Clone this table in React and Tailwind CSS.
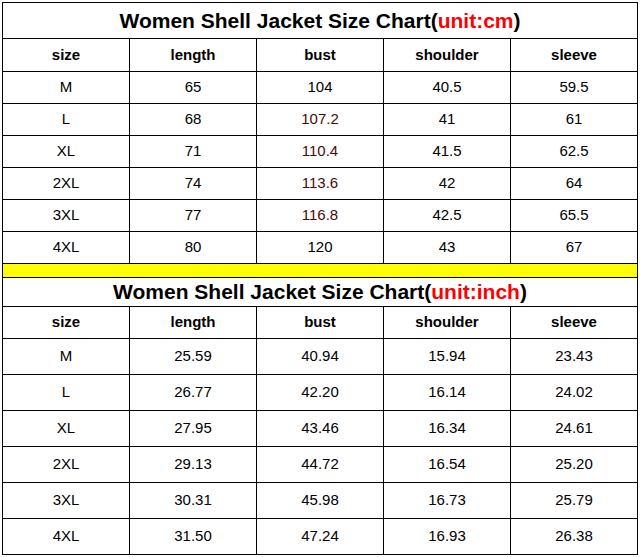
import React from "react";

const cols = ["size", "length", "bust", "shoulder", "sleeve"];

const cm = [
  ["M", "65", "104", "40.5", "59.5"],
  ["L", "68", "107.2", "41", "61"],
  ["XL", "71", "110.4", "41.5", "62.5"],
  ["2XL", "74", "113.6", "42", "64"],
  ["3XL", "77", "116.8", "42.5", "65.5"],
  ["4XL", "80", "120", "43", "67"],
];

const inch = [
  ["M", "25.59", "40.94", "15.94", "23.43"],
  ["L", "26.77", "42.20", "16.14", "24.02"],
  ["XL", "27.95", "43.46", "16.34", "24.61"],
  ["2XL", "29.13", "44.72", "16.54", "25.20"],
  ["3XL", "30.31", "45.98", "16.73", "25.79"],
  ["4XL", "31.50", "47.24", "16.93", "26.38"],
];

function Title({ unit, h }) {
  return (
    <div
      className={`col-span-5 flex items-center justify-center border-r border-b border-black font-bold text-[21px] text-black ${h}`}
    >
      <span>
        Women Shell Jacket Size Chart(<span className="text-[#ff0000]">{unit}</span>)
      </span>
    </div>
  );
}

function Header({ h }) {
  return cols.map((c) => (
    <div
      key={c}
      className={`flex items-center justify-center border-r border-b border-black font-bold text-[15px] text-black ${h}`}
    >
      {c}
    </div>
  ));
}

function Rows({ data, h, redBust }) {
  return data.map((row, i) =>
    row.map((v, j) => (
      <div
        key={i + "-" + j}
        className={`flex items-center justify-center border-r border-b border-black text-[15px] ${h} ${
          redBust && j === 2 && i > 0 && i < 5 ? "text-[#4a0a0a]" : "text-black"
        }`}
      >
        {v}
      </div>
    ))
  );
}

export default function App() {
  return (
    <div
      className="w-[640px] h-[557px] bg-white pt-[2px] pl-[2px]"
      style={{ fontFamily: '"Liberation Sans", Arial, sans-serif' }}
    >
      <div className="w-[636px] grid grid-cols-[repeat(5,127px)] border-l border-t border-black">
        <Title unit="unit:cm" h="h-[36px]" />
        <Header h="h-[33px]" />
        <Rows data={cm} h="h-[32px]" redBust />
        <div className="col-span-5 h-[14px] bg-[#ffff00] border-r border-b border-black" />
        <Title unit="unit:inch" h="h-[29px]" />
        <Header h="h-[32px]" />
        <Rows data={inch} h="h-[36px]" />
      </div>
    </div>
  );
}
